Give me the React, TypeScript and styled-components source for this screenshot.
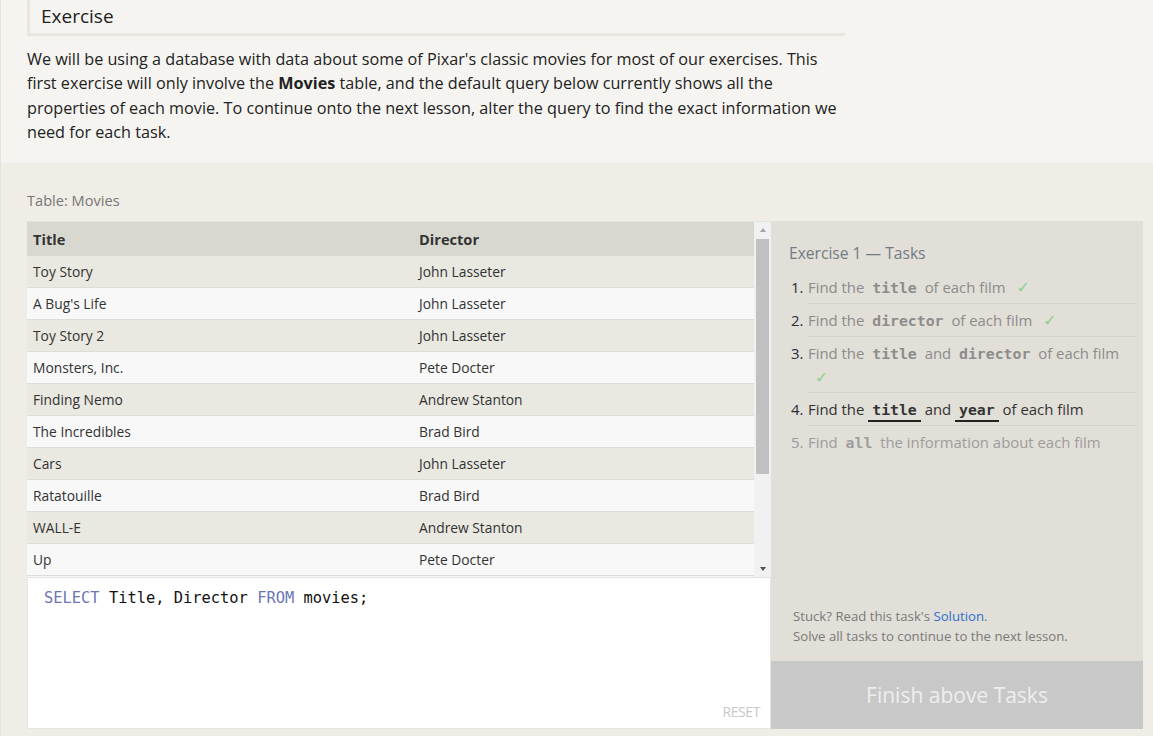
import React from "react";
import styled, { createGlobalStyle } from "styled-components";

const GlobalStyle = createGlobalStyle`
  html, body {
    margin: 0;
    padding: 0;
    background: #f5f4f0;
    font-family: "Open Sans", "Noto Sans", sans-serif;
    color: #222;
    overflow: hidden;
  }
`;

const Page = styled.div`
  width: 1153px;
  height: 736px;
  display: flex;
  flex-direction: column;
  background: #f5f4f0;
  border-left: 1px solid #e4e3dd;
  box-sizing: border-box;
`;

const Intro = styled.section`
  padding: 0 0 0 26px;
  height: 163px;
  box-sizing: border-box;
`;

const HeaderBox = styled.div`
  width: 818px;
  height: 36px;
  box-sizing: border-box;
  border-left: 3px solid #e8e7df;
  border-bottom: 3px solid #e8e7df;
  padding-left: 11px;
  font-size: 19px;
  line-height: 32px;
  color: #222;
`;

const Paragraph = styled.p`
  margin: 11px 0 0 0;
  width: 818px;
  font-size: 16.2px;
  line-height: 24.4px;
  color: #222;
`;

const Workspace = styled.section`
  flex: 1;
  background: #efede6;
  padding: 27px 10px 0 26px;
  border-radius: 3px 0 0 0;
`;

const Label = styled.div`
  font-size: 14.6px;
  color: #777;
  line-height: 20px;
  margin-bottom: 11px;
`;

const Grid = styled.div`
  display: grid;
  grid-template-columns: 744px 372px;
`;

const LeftCol = styled.div`
  display: flex;
  flex-direction: column;
`;

const TableArea = styled.div`
  height: 356px;
  display: flex;
  box-sizing: border-box;
  border-top: 1px solid #e4e3dc;
  background: #f8f8f8;
`;

const TableViewport = styled.div`
  flex: 1;
  overflow: hidden;
`;

const ScrollTrack = styled.div`
  width: 17px;
  flex: none;
  background: #f1f1f1;
  display: flex;
  flex-direction: column;
`;

const ScrollButton = styled.div<{ $dir: "up" | "down" }>`
  height: 17px;
  flex: none;
  display: flex;
  align-items: center;
  justify-content: center;

  &::before {
    content: "";
    width: 0;
    height: 0;
    border-left: 3.5px solid transparent;
    border-right: 3.5px solid transparent;
    ${(p) =>
      p.$dir === "up"
        ? "border-bottom: 4px solid #a3a3a3; margin-top: -1px;"
        : "border-top: 4px solid #505050; margin-top: 1px;"}
  }
`;

const Thumb = styled.div`
  height: 235px;
  flex: none;
  margin: 0 2px;
  background: #c1c1c1;
`;

const TrackRest = styled.div`
  flex: 1;
`;

const Table = styled.table`
  width: 100%;
  border-collapse: collapse;
  font-size: 13.8px;
  color: #333;
`;

const Th = styled.th<{ $w?: string }>`
  background: #d9d8d0;
  text-align: left;
  font-weight: 700;
  font-size: 14.6px;
  height: 34px;
  padding: 0 6px;
  color: #333;
  width: ${(p) => p.$w || "auto"};
`;

const Tr = styled.tr<{ $odd: boolean }>`
  background: ${(p) => (p.$odd ? "#e9e8e1" : "#f8f8f8")};
  border-bottom: 1px solid #dedcd6;
`;

const Td = styled.td`
  height: 31px;
  padding: 0 6px;
`;

const Editor = styled.div`
  height: 152px;
  box-sizing: border-box;
  background: #fff;
  border: 1px solid #e6e5e0;
  border-top: 1px solid #e2e1dc;
  padding: 9px 10px 6px 16px;
  display: flex;
  flex-direction: column;
`;

const Code = styled.pre`
  margin: 0;
  font-family: "DejaVu Sans Mono", "Liberation Mono", monospace;
  font-size: 15.4px;
  line-height: 22px;
  color: #111;
`;

const Keyword = styled.span`
  color: #6b76b4;
`;

const Reset = styled.div`
  margin-top: auto;
  align-self: flex-end;
  font-size: 14px;
  line-height: 20px;
  color: #c8c8c8;
  letter-spacing: -0.4px;
`;

const TasksPanel = styled.aside`
  height: 508px;
  background: #e1dfd7;
  display: flex;
  flex-direction: column;
`;

const TasksTitle = styled.h3`
  margin: 0;
  padding: 20px 0 0 18px;
  font-size: 15.6px;
  font-weight: 400;
  line-height: 24px;
  color: #737a84;
`;

const TaskList = styled.ol`
  list-style: none;
  margin: 6px 7px 0 20px;
  padding: 0;
`;

const Task = styled.li`
  display: flex;
  font-size: 14.9px;
  line-height: 24px;
`;

const Num = styled.span<{ $muted?: boolean }>`
  width: 17px;
  flex: none;
  padding-top: 4px;
  color: ${(p) => (p.$muted ? "#999" : "#2a2d38")};
`;

const TaskBody = styled.div<{ $state: "done" | "active" | "todo"; $last?: boolean; $tall?: boolean }>`
  flex: 1;
  padding: 4px 0 ${(p) => (p.$tall ? "3px" : "4px")} 0;
  border-bottom: ${(p) => (p.$last ? "none" : "1px solid #d5d3ca")};
  color: ${(p) => (p.$state === "active" ? "#333" : p.$state === "done" ? "#8c8c8c" : "#9d9d9d")};
`;

const Kw = styled.code<{ $active?: boolean }>`
  font-family: "DejaVu Sans Mono", "Liberation Mono", monospace;
  font-weight: 700;
  font-size: 14.8px;
  line-height: 1;
  padding: 0 4px 2px 4px;
  color: ${(p) => (p.$active ? "#333" : "inherit")};
  border-bottom: ${(p) => (p.$active ? "2px solid #222" : "none")};
`;

const Check = styled.span`
  color: #8fcf8f;
  margin-left: 7px;
  font-size: 16px;
  line-height: 1;
  font-family: "DejaVu Sans", sans-serif;
`;

const Spacer = styled.div`
  flex: 1;
`;

const Help = styled.div`
  padding: 0 0 15px 22px;
  font-size: 13.2px;
  line-height: 20px;
  color: #7a7a7a;
`;

const Link = styled.a`
  color: #2b6fd1;
  text-decoration: none;
`;

const FinishButton = styled.div`
  height: 68px;
  background: #c8c8c8;
  color: #eeeeee;
  font-size: 21px;
  display: flex;
  align-items: center;
  justify-content: center;
`;

const movies: [string, string][] = [
  ["Toy Story", "John Lasseter"],
  ["A Bug's Life", "John Lasseter"],
  ["Toy Story 2", "John Lasseter"],
  ["Monsters, Inc.", "Pete Docter"],
  ["Finding Nemo", "Andrew Stanton"],
  ["The Incredibles", "Brad Bird"],
  ["Cars", "John Lasseter"],
  ["Ratatouille", "Brad Bird"],
  ["WALL-E", "Andrew Stanton"],
  ["Up", "Pete Docter"],
];

export default function App() {
  return (
    <>
      <GlobalStyle />
      <Page>
        <Intro>
          <HeaderBox>Exercise</HeaderBox>
          <Paragraph>
            We will be using a database with data about some of Pixar's classic movies for most of our exercises. This
            first exercise will only involve the <b>Movies</b> table, and the default query below currently shows all the
            properties of each movie. To continue onto the next lesson, alter the query to find the exact information we
            need for each task.
          </Paragraph>
        </Intro>
        <Workspace>
          <Label>Table: Movies</Label>
          <Grid>
            <LeftCol>
              <TableArea>
                <TableViewport>
                  <Table>
                    <thead>
                      <tr>
                        <Th $w="374px">Title</Th>
                        <Th>Director</Th>
                      </tr>
                    </thead>
                    <tbody>
                      {movies.map(([t, d], i) => (
                        <Tr key={t} $odd={i % 2 === 0}>
                          <Td>{t}</Td>
                          <Td>{d}</Td>
                        </Tr>
                      ))}
                    </tbody>
                  </Table>
                </TableViewport>
                <ScrollTrack>
                  <ScrollButton $dir="up" />
                  <Thumb />
                  <TrackRest />
                  <ScrollButton $dir="down" />
                </ScrollTrack>
              </TableArea>
              <Editor>
                <Code>
                  <Keyword>SELECT</Keyword> Title, Director <Keyword>FROM</Keyword> movies;
                </Code>
                <Reset>RESET</Reset>
              </Editor>
            </LeftCol>
            <TasksPanel>
              <TasksTitle>Exercise 1 — Tasks</TasksTitle>
              <TaskList>
                <Task>
                  <Num>1.</Num>
                  <TaskBody $state="done">
                    Find the <Kw>title</Kw> of each film <Check>✓</Check>
                  </TaskBody>
                </Task>
                <Task>
                  <Num>2.</Num>
                  <TaskBody $state="done">
                    Find the <Kw>director</Kw> of each film <Check>✓</Check>
                  </TaskBody>
                </Task>
                <Task>
                  <Num>3.</Num>
                  <TaskBody $state="done" $tall>
                    Find the <Kw>title</Kw> and <Kw>director</Kw> of each film <Check>✓</Check>
                  </TaskBody>
                </Task>
                <Task>
                  <Num>4.</Num>
                  <TaskBody $state="active">
                    Find the <Kw $active>title</Kw> and <Kw $active>year</Kw> of each film
                  </TaskBody>
                </Task>
                <Task>
                  <Num $muted>5.</Num>
                  <TaskBody $state="todo" $last>
                    Find <Kw>all</Kw> the information about each film
                  </TaskBody>
                </Task>
              </TaskList>
              <Spacer />
              <Help>
                Stuck? Read this task's <Link href="#">Solution</Link>.
                <br />
                Solve all tasks to continue to the next lesson.
              </Help>
              <FinishButton>Finish above Tasks</FinishButton>
            </TasksPanel>
          </Grid>
        </Workspace>
      </Page>
    </>
  );
}
